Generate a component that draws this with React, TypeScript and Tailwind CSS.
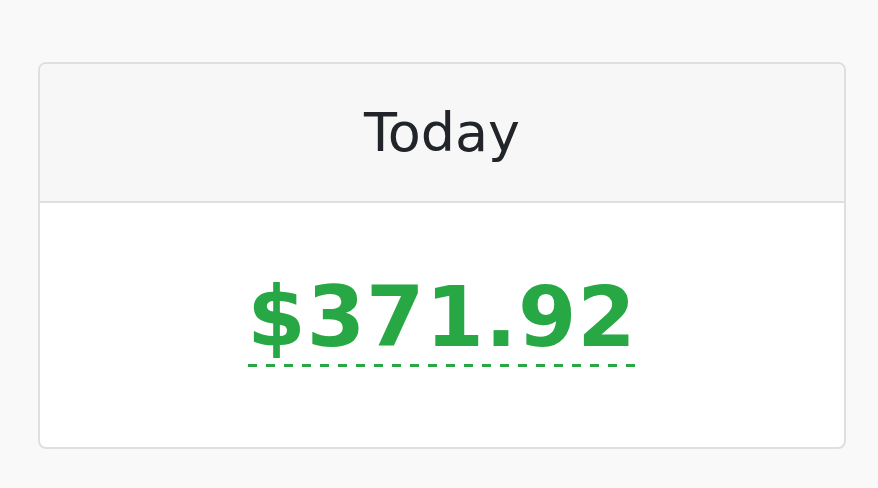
export default function App() {
  return (
    <div className="min-h-[488px] w-[878px] bg-[#f9f9f9] pt-[62px] pl-[38px]" style={{ fontFamily: '"DejaVu Sans", sans-serif' }}>
      <div className="w-[808px] h-[387px] rounded-[8px] border-2 border-[#dfdfdf] bg-white overflow-hidden flex flex-col">
        <div className="h-[139px] shrink-0 bg-[#f7f7f7] border-b-2 border-[#dfdfdf] flex items-center justify-center">
          <span className="text-[54px] leading-none text-[#212529]">Today</span>
        </div>
        <div className="flex-1 flex flex-col items-center justify-center pb-[9px]">
          <div className="flex flex-col items-center">
            <span className="text-[84px] leading-none font-bold tracking-[1px] text-[#28a745]">$371.92</span>
            <div className="mt-[5px] w-[388px] h-[3px] bg-[repeating-linear-gradient(90deg,#28a745_0_9px,transparent_9px_18px)]" />
          </div>
        </div>
      </div>
    </div>
  );
}
